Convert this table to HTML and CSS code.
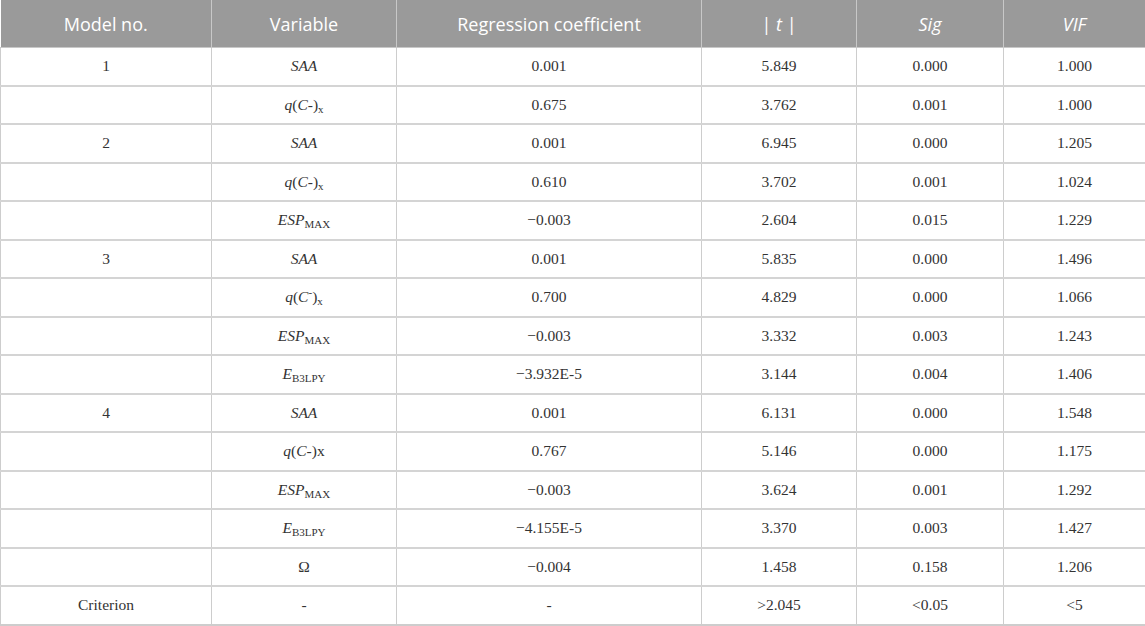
FILE: index.html
```html
<!DOCTYPE html>
<html>
<head>
<meta charset="utf-8">
<link rel="stylesheet" href="styles.css">
</head>
<body>
<table class="reg">
  <colgroup>
    <col class="c1"><col class="c2"><col class="c3"><col class="c4"><col class="c5"><col class="c6">
  </colgroup>
  <thead>
    <tr>
      <th>Model no.</th>
      <th>Variable</th>
      <th>Regression coefficient</th>
      <th>| <i>t</i> |</th>
      <th><i>Sig</i></th>
      <th><i>VIF</i></th>
    </tr>
  </thead>
  <tbody>
    <tr><td>1</td><td><i>SAA</i></td><td>0.001</td><td>5.849</td><td>0.000</td><td>1.000</td></tr>
    <tr><td></td><td><i>q</i>(<i>C</i>-)<sub>x</sub></td><td>0.675</td><td>3.762</td><td>0.001</td><td>1.000</td></tr>
    <tr><td>2</td><td><i>SAA</i></td><td>0.001</td><td>6.945</td><td>0.000</td><td>1.205</td></tr>
    <tr><td></td><td><i>q</i>(<i>C</i>-)<sub>x</sub></td><td>0.610</td><td>3.702</td><td>0.001</td><td>1.024</td></tr>
    <tr><td></td><td><i>ESP</i><sub>MAX</sub></td><td>−0.003</td><td>2.604</td><td>0.015</td><td>1.229</td></tr>
    <tr><td>3</td><td><i>SAA</i></td><td>0.001</td><td>5.835</td><td>0.000</td><td>1.496</td></tr>
    <tr><td></td><td><i>q</i>(<i>C</i><sup>-</sup>)<sub>x</sub></td><td>0.700</td><td>4.829</td><td>0.000</td><td>1.066</td></tr>
    <tr><td></td><td><i>ESP</i><sub>MAX</sub></td><td>−0.003</td><td>3.332</td><td>0.003</td><td>1.243</td></tr>
    <tr><td></td><td><i>E</i><sub>B3LPY</sub></td><td>−3.932E-5</td><td>3.144</td><td>0.004</td><td>1.406</td></tr>
    <tr><td>4</td><td><i>SAA</i></td><td>0.001</td><td>6.131</td><td>0.000</td><td>1.548</td></tr>
    <tr><td></td><td><i>q</i>(<i>C</i>-)x</td><td>0.767</td><td>5.146</td><td>0.000</td><td>1.175</td></tr>
    <tr><td></td><td><i>ESP</i><sub>MAX</sub></td><td>−0.003</td><td>3.624</td><td>0.001</td><td>1.292</td></tr>
    <tr><td></td><td><i>E</i><sub>B3LPY</sub></td><td>−4.155E-5</td><td>3.370</td><td>0.003</td><td>1.427</td></tr>
    <tr><td></td><td>Ω</td><td>−0.004</td><td>1.458</td><td>0.158</td><td>1.206</td></tr>
    <tr><td>Criterion</td><td>-</td><td>-</td><td>&gt;2.045</td><td>&lt;0.05</td><td>&lt;5</td></tr>
  </tbody>
</table>
</body>
</html>
```

FILE: styles.css
```css
html, body {
  margin: 0;
  padding: 0;
  background: #ffffff;
}
.reg {
  width: 1145px;
  border-collapse: collapse;
  table-layout: fixed;
  font-family: "Liberation Serif", "Times New Roman", serif;
  font-size: 15.5px;
  color: #333333;
}
.c1 { width: 211px; }
.c2 { width: 185px; }
.c3 { width: 305px; }
.c4 { width: 155px; }
.c5 { width: 147px; }
.c6 { width: 142px; }
.reg th {
  height: 47px;
  background: #9a9a9a;
  color: #ffffff;
  font-family: "Open Sans", "Noto Sans", sans-serif;
  font-weight: 400;
  font-size: 18px;
  padding: 0 4px;
  text-align: center;
  border-left: 1px solid #c8c8c8;
  border-right: 1px solid #c8c8c8;
  border-bottom: 1px solid #c8c8c8;
}
.reg th:first-child { border-left: 0; }
.reg td {
  height: 36.5px;
  padding: 0 4px;
  text-align: center;
  border: 1px solid #cdcdcd;
  border-top: 2px solid #d4d4d4;
}
.reg tbody tr:first-child td { border-top: 1px solid #cdcdcd; }
.reg tbody tr:last-child td { border-bottom: 2px solid #cdcdcd; }
.reg sub, .reg sup {
  font-size: 11px;
  line-height: 0;
}
.reg sub { vertical-align: -3px; }
.reg sup { vertical-align: 6px; }
```
